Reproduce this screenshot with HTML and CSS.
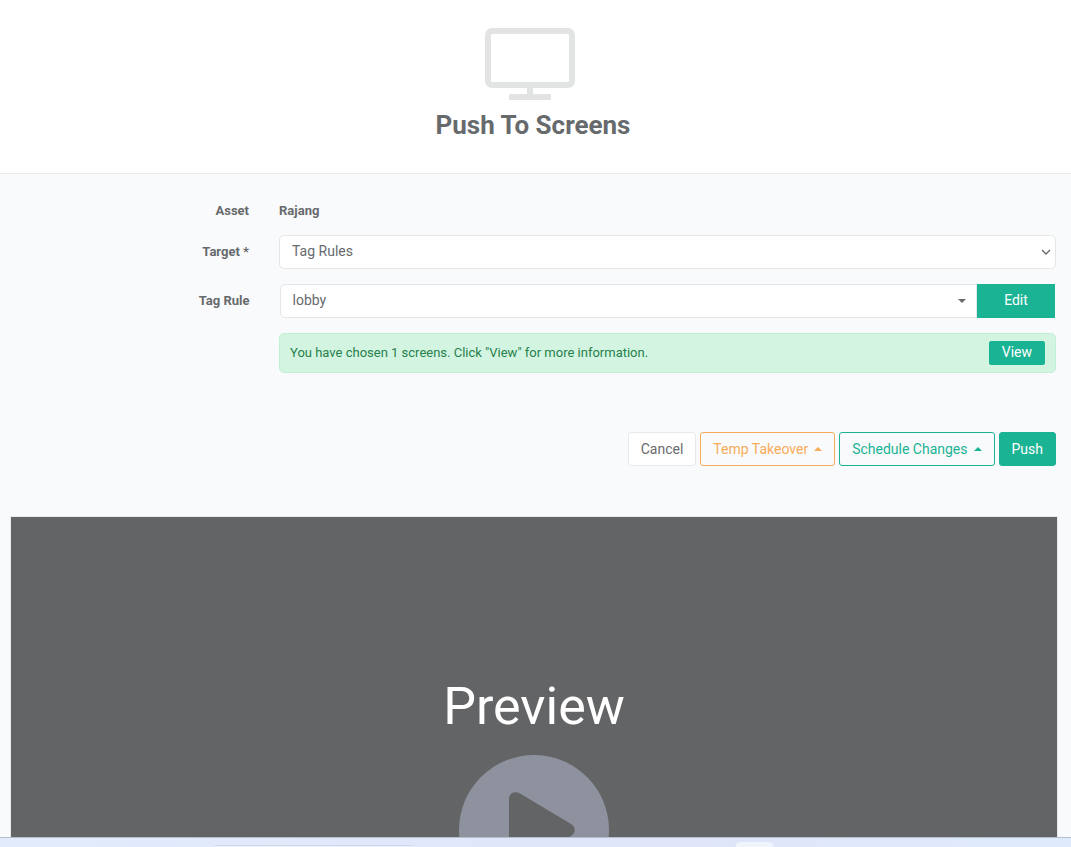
FILE: index.html
```html
<!DOCTYPE html>
<html lang="en">
<head>
<meta charset="utf-8">
<title>Push To Screens</title>
<link rel="stylesheet" href="styles.css">
</head>
<body>
<header class="hero">
  <svg class="hero-icon" viewBox="0 0 90 72" aria-hidden="true">
    <rect x="3" y="3" width="84" height="54" rx="4"/>
    <path d="M45 60v9"/>
    <rect class="base" x="24" y="66" width="42" height="6" rx="1"/>
  </svg>
  <h1 class="hero-title">Push To Screens</h1>
</header>
<main class="content">
  <form class="form">
    <div class="row row-text">
      <span class="label">Asset</span>
      <div class="field"><strong class="value">Rajang</strong></div>
    </div>
    <div class="row">
      <label class="label" for="target">Target *</label>
      <div class="field">
        <div class="select-wrap">
          <select class="control" id="target"><option>Tag Rules</option></select>
          <svg class="chevron" viewBox="0 0 10 6" aria-hidden="true"><path d="M1 1l4 4 4-4"/></svg>
        </div>
      </div>
    </div>
    <div class="row row-group">
      <label class="label" for="rule">Tag Rule</label>
      <div class="field field-group">
        <div class="select-wrap">
          <select class="control control-joined" id="rule"><option>lobby</option></select>
          <span class="caret caret-select"></span>
        </div>
        <button class="btn btn-primary btn-edit" type="button">Edit</button>
      </div>
    </div>
    <div class="row">
      <span class="label"></span>
      <div class="field">
        <div class="notice">
          <span>You have chosen 1 screens. Click "View" for more information.</span>
          <button class="btn btn-primary btn-small" type="button">View</button>
        </div>
      </div>
    </div>
    <div class="actions">
      <button class="btn btn-plain" type="button">Cancel</button>
      <button class="btn btn-warning" type="button">Temp Takeover<span class="caret caret-up"></span></button>
      <button class="btn btn-outline" type="button">Schedule Changes<span class="caret caret-up"></span></button>
      <button class="btn btn-primary" type="button">Push</button>
    </div>
  </form>
  <section class="preview">
    <h2 class="preview-title">Preview</h2>
    <svg class="play" viewBox="0 0 150 150" aria-hidden="true">
      <path fill-rule="evenodd" d="M75 0a75 75 0 1 1 0 150a75 75 0 1 1 0-150zM50 44C50 38 56 35.500 61 38.500L112 69C117 72 117 78 112 81L61 111.500C56 114.500 50 112 50 106z"/>
    </svg>
  </section>
</main>
<footer class="taskbar">
  <div class="search"></div>
  <div class="task"></div>
</footer>
</body>
</html>
```
FILE: styles.css
```css
* {
  box-sizing: border-box;
}

body {
  margin: 0;
  height: 100vh;
  display: flex;
  flex-direction: column;
  overflow: hidden;
  background: #f9fafc;
  color: #676a6c;
  font: 13px/20px Roboto, "Liberation Sans", sans-serif;
}

.hero {
  flex: none;
  display: flex;
  flex-direction: column;
  align-items: center;
  padding: 28px 5px 32px 0;
  background: #fff;
  border-bottom: 1px solid #e7eaec;
}

.hero-icon {
  width: 90px;
  height: 72px;
  margin-right: 6px;
  fill: none;
  stroke: #e2e4e4;
  stroke-width: 6;
}

.hero-icon .base {
  fill: #e2e4e4;
  stroke: none;
}

.hero-title {
  margin: 9px 0 0;
  font-size: 26px;
  line-height: 32px;
  font-weight: 700;
}

.content {
  flex: 1;
  min-height: 0;
  overflow: hidden;
}

.form {
  display: flex;
  flex-direction: column;
  gap: 15px;
  padding: 27px 15px 0 0;
}

.row {
  display: flex;
  align-items: center;
}

.row-text {
  margin-bottom: -1px;
}

.row-group {
  padding: 0 1px;
}

.label {
  flex: 0 0 25%;
  padding-right: 15px;
  text-align: right;
  font-weight: 700;
}

.field {
  flex: 1;
  min-width: 0;
  padding-left: 15px;
}

.field-group {
  display: flex;
}

.value {
  font-weight: 700;
}

.select-wrap {
  position: relative;
  flex: 1;
}

.control {
  display: block;
  width: 100%;
  height: 34px;
  padding: 0 12px 2px;
  appearance: none;
  background: #fff;
  border: 1px solid #e5e6e7;
  border-radius: 5px;
  color: inherit;
  font: 14px/20px Roboto, "Liberation Sans", sans-serif;
}

.control-joined {
  border-radius: 5px 0 0 5px;
}

.chevron {
  position: absolute;
  right: 5px;
  top: 14px;
  width: 10px;
  height: 6px;
  fill: none;
  stroke: #666;
  stroke-width: 1.3;
  pointer-events: none;
}

.caret {
  display: inline-block;
  border: 4px solid transparent;
}

.caret-select {
  position: absolute;
  right: 11px;
  top: 15px;
  border-top-color: #676a6c;
  border-bottom: 0;
  pointer-events: none;
}

.caret-up {
  margin: 0 0 3px 6px;
  vertical-align: middle;
  border-top: 0;
  border-bottom-color: currentColor;
}

.btn {
  height: 34px;
  padding: 0 12px;
  border: 1px solid;
  border-radius: 3px;
  background: none;
  font: 14px/20px Roboto, "Liberation Sans", sans-serif;
}

.btn-primary {
  background: #1ab394;
  border-color: #1ab394;
  color: #fff;
}

.btn-plain {
  background: #fff;
  border-color: #e7eaec;
  color: #676a6c;
}

.btn-warning {
  border-color: #f8ac59;
  color: #f8ac59;
}

.btn-outline {
  border-color: #1ab394;
  color: #1ab394;
}

.btn-edit {
  width: 78px;
  padding-bottom: 2px;
  border-radius: 0;
}

.btn-small {
  height: 24px;
  padding-bottom: 2px;
  border-radius: 2px;
}

.notice {
  display: flex;
  align-items: center;
  justify-content: space-between;
  height: 40px;
  padding: 0 10px;
  background: #d4f4e2;
  border: 1px solid #c3efd5;
  border-radius: 5px;
  color: #26804c;
}

.actions {
  display: flex;
  justify-content: flex-end;
  gap: 4px;
  margin-top: 44px;
}

.preview {
  display: flex;
  flex-direction: column;
  align-items: center;
  height: 590px;
  margin: 50px 13px 0 10px;
  padding-top: 160px;
  background: #636466;
  border: 1px solid #e7eaec;
}

.preview-title {
  margin: 0 0 18px;
  color: #fff;
  font-size: 52px;
  line-height: 60px;
  font-weight: 400;
}

.play {
  flex: none;
  width: 150px;
  height: 150px;
  fill: #8e919e;
}

.taskbar {
  flex: none;
  display: flex;
  align-items: flex-end;
  height: 10px;
  padding-left: 20%;
  overflow: hidden;
  background: linear-gradient(90deg, #e1ebfc, #e0e5f9 65%, #deebfc);
  border-top: 1px solid #b4bfcc;
}

.search {
  width: 200px;
  height: 2px;
  border-top: 1px solid #cedaea;
  border-radius: 8px 8px 0 0;
  background: #eaf1fd;
}

.task {
  width: 36px;
  height: 5px;
  margin-left: 322px;
  border-radius: 4px 4px 0 0;
  background: #f0f4fd;
  box-shadow: 2px 0 0 #e9effb;
}
```
